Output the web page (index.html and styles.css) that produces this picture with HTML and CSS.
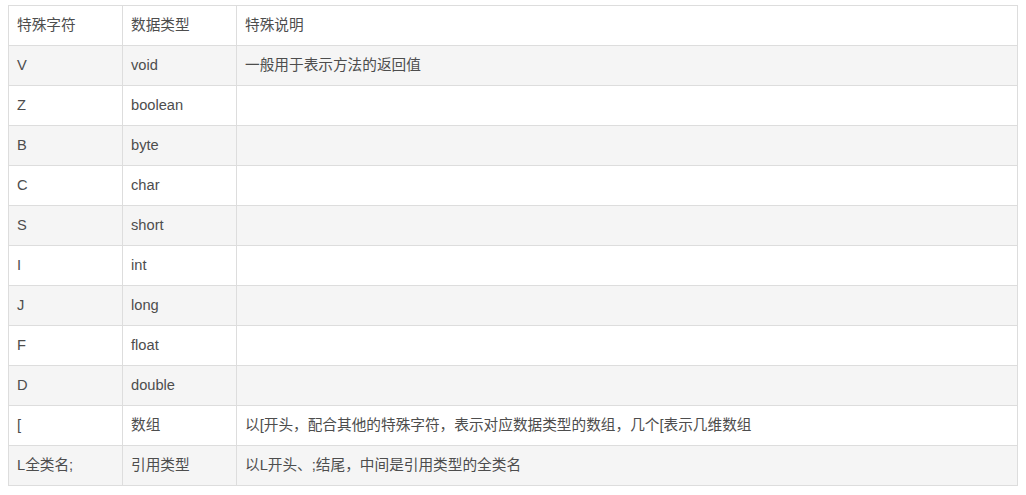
FILE: index.html
```html
<!DOCTYPE html>
<html lang="zh-CN">
<head>
  <meta charset="UTF-8">
  <title>特殊字符</title>
  <link rel="stylesheet" href="styles.css">
</head>
<body>
  <table class="tabela">
    <thead>
      <tr>
        <th class="col-char">特殊字符</th>
        <th class="col-type">数据类型</th>
        <th>特殊说明</th>
      </tr>
    </thead>
    <tbody>
      <tr><td>V</td><td>void</td><td>一般用于表示方法的返回值</td></tr>
      <tr><td>Z</td><td>boolean</td><td></td></tr>
      <tr><td>B</td><td>byte</td><td></td></tr>
      <tr><td>C</td><td>char</td><td></td></tr>
      <tr><td>S</td><td>short</td><td></td></tr>
      <tr><td>I</td><td>int</td><td></td></tr>
      <tr><td>J</td><td>long</td><td></td></tr>
      <tr><td>F</td><td>float</td><td></td></tr>
      <tr><td>D</td><td>double</td><td></td></tr>
      <tr><td>[</td><td>数组</td><td>以[开头，配合其他的特殊字符，表示对应数据类型的数组，几个[表示几维数组</td></tr>
      <tr><td>L全类名;</td><td>引用类型</td><td>以L开头、;结尾，中间是引用类型的全类名</td></tr>
    </tbody>
  </table>
</body>
</html>
```

FILE: styles.css
```css
:root {
  --text-color: #4d4d4d;
  --border-color: #ddd;
  --stripe-color: #f5f5f5;
}

* {
  box-sizing: border-box;
}

body {
  margin: 5px 8px;
  background-color: #fff;
  font-family: "Liberation Sans", "Noto Sans CJK SC", sans-serif;
  font-size: 11pt;
  color: var(--text-color);
}

.tabela {
  width: 100%;
  border-collapse: collapse;
  table-layout: fixed;
  th, td {
    height: 40px;
    padding: 0 8px 2px;
    border: 1px solid var(--border-color);
    text-align: left;
    font-weight: normal;
    vertical-align: middle;
    line-height: 22px;
  }
  .col-char, .col-type {
    width: 114px;
  }
  tbody tr:nth-child(odd) {
    background-color: var(--stripe-color);
  }
}
```
